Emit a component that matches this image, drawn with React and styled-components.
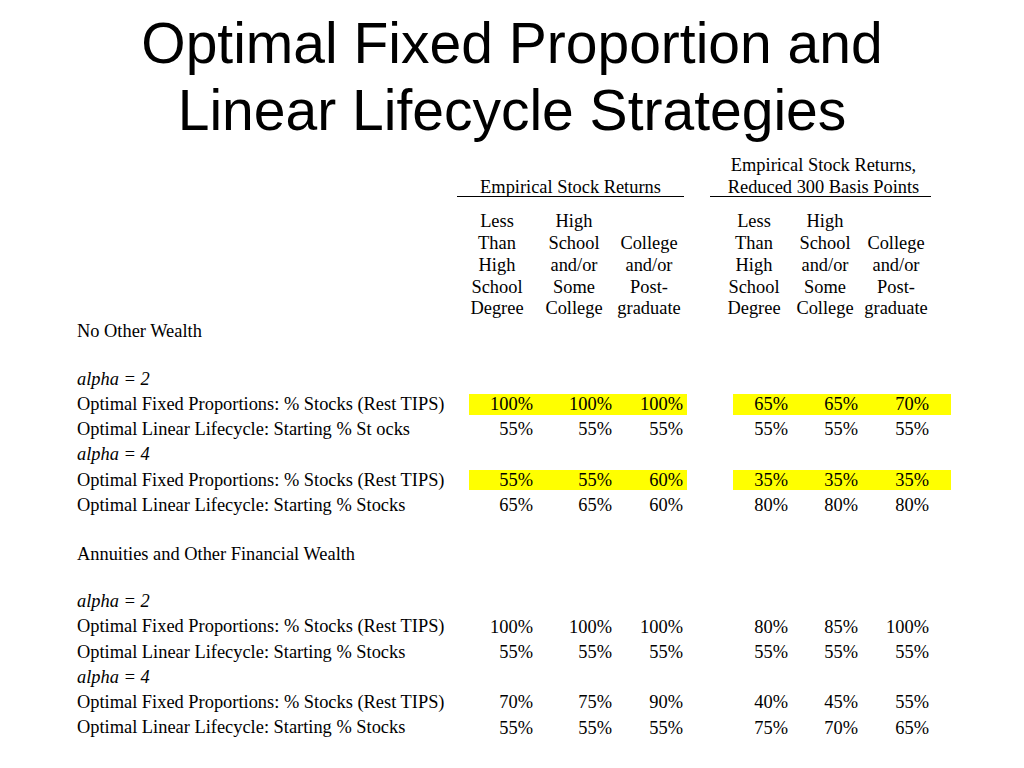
import React from 'react';
import styled, { createGlobalStyle } from 'styled-components';

const COLS = '392px 68px 79px 71px 46px 59px 70px 89px';
const VALUE_COLS = [2, 3, 4, 6, 7, 8];

const headers = [
  { col: 2, shift: 12, lines: ['Less', 'Than', 'High', 'School', 'Degree'] },
  { col: 3, shift: 5, lines: ['High', 'School', 'and/or', 'Some', 'College'] },
  { col: 4, shift: 5, lines: ['College', 'and/or', 'Post-', 'graduate'] },
  { col: 6, shift: 17, lines: ['Less', 'Than', 'High', 'School', 'Degree'] },
  { col: 7, shift: 4, lines: ['High', 'School', 'and/or', 'Some', 'College'] },
  { col: 8, shift: 21, lines: ['College', 'and/or', 'Post-', 'graduate'] }
];

const FIXED = 'Optimal Fixed Proportions: % Stocks (Rest TIPS)';

const sections = [
  {
    title: 'No Other Wealth',
    blocks: [
      {
        alpha: 'alpha = 2',
        rows: [
          { label: FIXED, values: ['100%', '100%', '100%', '65%', '65%', '70%'], hl: true },
          { label: 'Optimal Linear Lifecycle: Starting % St ocks', values: ['55%', '55%', '55%', '55%', '55%', '55%'] }
        ]
      },
      {
        alpha: 'alpha = 4',
        rows: [
          { label: FIXED, values: ['55%', '55%', '60%', '35%', '35%', '35%'], hl: true },
          { label: 'Optimal Linear Lifecycle: Starting % Stocks', values: ['65%', '65%', '60%', '80%', '80%', '80%'] }
        ]
      }
    ]
  },
  {
    title: 'Annuities and Other Financial Wealth',
    blocks: [
      {
        alpha: 'alpha = 2',
        rows: [
          { label: FIXED, values: ['100%', '100%', '100%', '80%', '85%', '100%'] },
          { label: 'Optimal Linear Lifecycle: Starting % Stocks', values: ['55%', '55%', '55%', '55%', '55%', '55%'] }
        ]
      },
      {
        alpha: 'alpha = 4',
        rows: [
          { label: FIXED, values: ['70%', '75%', '90%', '40%', '45%', '55%'] },
          { label: 'Optimal Linear Lifecycle: Starting % Stocks', values: ['55%', '55%', '55%', '75%', '70%', '65%'] }
        ]
      }
    ]
  }
];

const App = () => {
  return (
    <Page>
      <GlobalStyle />
      <Title>
        Optimal Fixed Proportion and
        <br />
        Linear Lifecycle Strategies
      </Title>
      <Table>
        <GridRow $align="end">
          <GroupHead $col={2} $ml={-12} $mr={3}>
            <GroupText>Empirical Stock Returns</GroupText>
          </GroupHead>
          <GroupHead $col={6} $ml={-23} $mr={20} $pl={6}>
            <GroupText>
              Empirical Stock Returns,
              <br />
              Reduced 300 Basis Points
            </GroupText>
          </GroupHead>
        </GridRow>
        <GridRow $align="end" $mt={14}>
          {headers.map(h => (
            <ColHead key={h.col} $col={h.col} $shift={h.shift}>
              <ColText>
                {h.lines.map((line, i) => (
                  <React.Fragment key={i}>
                    {i > 0 && <br />}
                    {line}
                  </React.Fragment>
                ))}
              </ColText>
            </ColHead>
          ))}
        </GridRow>
        {sections.map((section, si) => (
          <React.Fragment key={section.title}>
            <Spacer $h={si > 0 ? 25.5 : 1} />
            <GridRow $h={22}>
              <Label>{section.title}</Label>
            </GridRow>
            <Spacer $h={23.5} />
            {section.blocks.map(block => (
              <React.Fragment key={block.alpha}>
                <GridRow $h={25.25}>
                  <Label $italic>{block.alpha}</Label>
                </GridRow>
                {block.rows.map((row, ri) => (
                  <GridRow key={ri} $h={25.25}>
                    <Label>{row.label}</Label>
                    {row.values.map((v, vi) => (
                      <Value
                        key={vi}
                        $col={VALUE_COLS[vi]}
                        $pad={vi === 5 ? 22 : 4}
                        $hl={row.hl}
                      >
                        {v}
                      </Value>
                    ))}
                  </GridRow>
                ))}
              </React.Fragment>
            ))}
          </React.Fragment>
        ))}
      </Table>
    </Page>
  );
};

export default App;

const GlobalStyle = createGlobalStyle`
  html, body {
    margin: 0;
    padding: 0;
    background: #fff;
  }
`;

const Page = styled.div`
  width: 1024px;
  min-height: 768px;
  background: #fff;
  color: #000;
  font-family: 'Liberation Serif', 'Times New Roman', serif;
  overflow: hidden;
`;

const Title = styled.h1`
  margin: 0;
  padding-top: 10px;
  font-family: 'Liberation Sans', Arial, sans-serif;
  font-size: 57px;
  font-weight: normal;
  line-height: 67px;
  text-align: center;
`;

const Table = styled.div`
  margin-top: 11px;
  padding-left: 77px;
  font-size: 18.4px;
`;

const GridRow = styled.div`
  display: grid;
  grid-template-columns: ${COLS};
  align-items: ${props => props.$align || 'center'};
  height: ${props => (props.$h ? `${props.$h}px` : 'auto')};
  margin-top: ${props => props.$mt || 0}px;
`;

const GroupHead = styled.div`
  grid-column: ${props => props.$col} / span 3;
  margin-left: ${props => props.$ml}px;
  margin-right: ${props => props.$mr}px;
  padding-left: ${props => props.$pl || 0}px;
  border-bottom: 1px solid #000;
  text-align: center;
  line-height: 21.7px;
  white-space: nowrap;
`;

const GroupText = styled.div`
  margin-bottom: -2px;
`;

const ColHead = styled.div`
  grid-column: ${props => props.$col};
  display: flex;
  justify-content: center;
  padding-right: ${props => props.$shift}px;
  line-height: 21.7px;
`;

const ColText = styled.div`
  text-align: center;
  white-space: nowrap;
`;

const Label = styled.div`
  grid-column: 1;
  white-space: nowrap;
  font-style: ${props => (props.$italic ? 'italic' : 'normal')};
`;

const Value = styled.div`
  grid-column: ${props => props.$col};
  text-align: right;
  padding-right: ${props => props.$pad}px;
  line-height: 20.5px;
  background: ${props => (props.$hl ? '#ffff00' : 'transparent')};
`;

const Spacer = styled.div`
  height: ${props => props.$h}px;
`;
